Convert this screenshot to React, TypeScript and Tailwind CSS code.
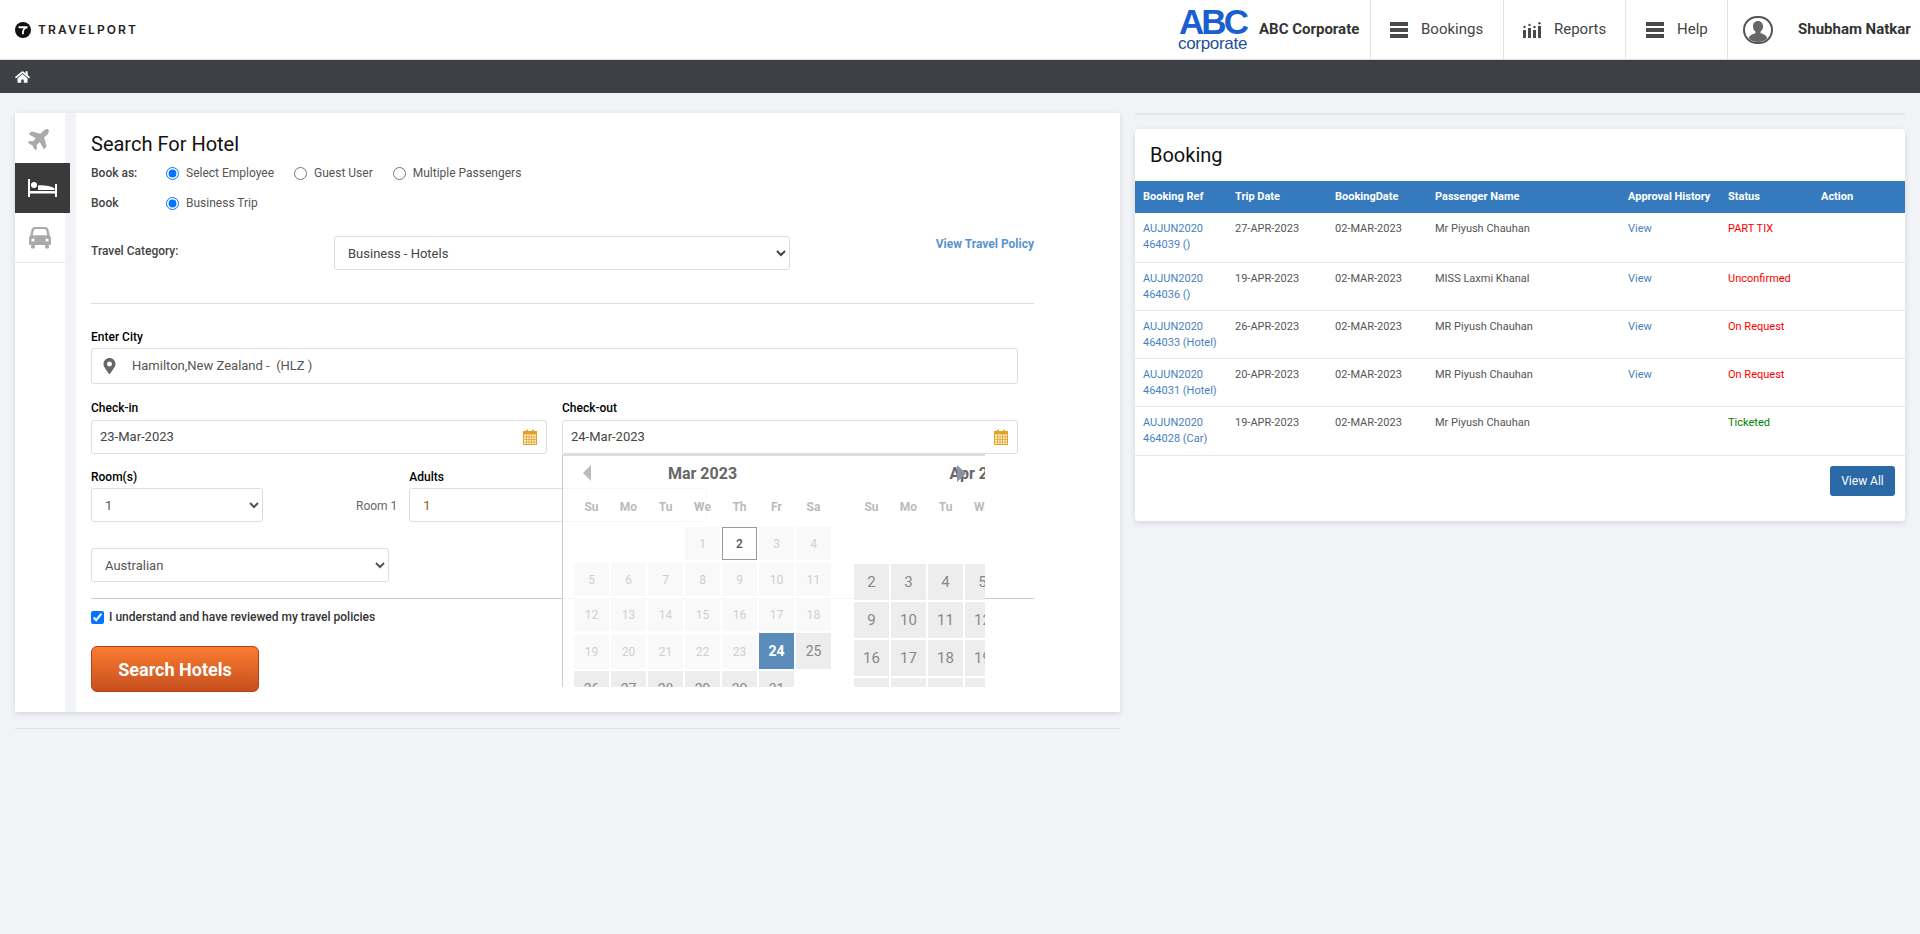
import { FaHome, FaMapMarkerAlt, FaPlane } from 'react-icons/fa';

const bookings = [
  { ref: 'AUJUN2020 464039 ()', trip: '27-APR-2023', name: 'Mr Piyush Chauhan', view: true, status: 'PART TIX', color: 'text-[#ff0000]', height: 'h-[49px]' },
  { ref: 'AUJUN2020 464036 ()', trip: '19-APR-2023', name: 'MISS Laxmi Khanal', view: true, status: 'Unconfirmed', color: 'text-[#ff0000]', height: 'h-[48px]' },
  { ref: 'AUJUN2020 464033 (Hotel)', trip: '26-APR-2023', name: 'MR Piyush Chauhan', view: true, status: 'On Request', color: 'text-[#ff0000]', height: 'h-[48px]' },
  { ref: 'AUJUN2020 464031 (Hotel)', trip: '20-APR-2023', name: 'MR Piyush Chauhan', view: true, status: 'On Request', color: 'text-[#ff0000]', height: 'h-[48px]' },
  { ref: 'AUJUN2020 464028 (Car)', trip: '19-APR-2023', name: 'Mr Piyush Chauhan', view: false, status: 'Ticketed', color: 'text-[#008000]', height: 'h-[49px]' },
];

const weekdays = ['Su', 'Mo', 'Tu', 'We', 'Th', 'Fr', 'Sa'];

function MenuIcon() {
  return (
    <svg width="18" height="16" viewBox="0 0 18 16" fill="#4a4a4a">
      <rect y="0" width="18" height="4" />
      <rect y="6" width="18" height="4" />
      <rect y="12" width="18" height="4" />
    </svg>
  );
}

function ReportsIcon() {
  return (
    <svg width="18" height="16" viewBox="0 0 18 16" fill="#4a4a4a">
      <rect x="0" y="8" width="3" height="8" />
      <rect x="5" y="6" width="3" height="10" />
      <rect x="10" y="8" width="3" height="8" />
      <rect x="15" y="4" width="3" height="12" />
      <circle cx="1.5" cy="5" r="1.2" />
      <circle cx="6.5" cy="3" r="1.2" />
      <circle cx="11.5" cy="5" r="1.2" />
      <circle cx="16.5" cy="1.2" r="1.2" />
    </svg>
  );
}

function AvatarIcon() {
  return (
    <svg width="30" height="28" viewBox="0 0 30 28">
      <rect x="1" y="1" width="28" height="26" rx="13" fill="#fff" stroke="#555" strokeWidth="2" />
      <path d="M15 5c-3.2 0-5 2.4-5 5.4 0 2.3 1 4.2 2.4 5.2v1.6c-3.2 1-6 2.2-6.6 4.8 1.8 2.6 5 4 9.2 4s7.4-1.4 9.2-4c-.6-2.6-3.400-3.800-6.600-4.800v-1.600c1.400-1 2.400-2.900 2.400-5.200C20 7.400 18.200 5 15 5z" fill="#666" />
    </svg>
  );
}

function LogoMark() {
  return (
    <svg width="16" height="16" viewBox="0 0 16 16">
      <circle cx="8" cy="8" r="8" fill="#111" />
      <path d="M3.500 4.300h9v1.900c-1.300.1-2.300.6-2.900 1.500-.6 1-.8 2.300-.8 4.600H7c0-2.300.2-3.700.8-4.900.3-.5.600-.9 1-1.200H3.500z" fill="#fff" />
    </svg>
  );
}

function CalendarIcon() {
  return (
    <svg width="14" height="16" viewBox="0 0 14 16" fill="none">
      <rect x="0.500" y="2.500" width="13" height="13" fill="#fdf3dc" stroke="#e3a126" />
      <rect x="0" y="2" width="14" height="3.500" fill="#e3a126" />
      <rect x="3" y="0.500" width="2" height="3" rx="1" fill="#e3a126" />
      <rect x="9" y="0.500" width="2" height="3" rx="1" fill="#e3a126" />
      <path d="M1 8h12M1 10.500h12M1 13h12M3.500 6v9M6 6v9M8.500 6v9M11 6v9" stroke="#e3a126" strokeWidth="0.800" />
    </svg>
  );
}

function BedIcon() {
  return (
    <svg width="29" height="18" viewBox="0 0 29 18" fill="#fff">
      <rect x="0" y="0" width="2" height="18" />
      <rect x="27" y="5" width="2" height="13" />
      <rect x="0" y="12" width="29" height="2.500" />
      <circle cx="6" cy="6" r="3" />
      <path d="M10 6.500c6-.5 12 .5 16 2.500 1 .6 1 2 0 2H10z" />
    </svg>
  );
}

function CarIcon() {
  return (
    <svg width="22" height="22" viewBox="0 0 22 22" fill="#aaa">
      <path d="M6 0h10c1.800 0 3 1 3.400 2.600L21 9c.7.500 1 1.300 1 2.200V17c0 .6-.4 1-1 1H1c-.6 0-1-.4-1-1v-5.800C0 10.300.3 9.500 1 9l1.600-6.400C3 1 4.200 0 6 0z" />
      <path d="M6.300 2h9.400c.7 0 1.200.4 1.400 1l1.200 5.200H3.700L4.900 3c.2-.6.700-1 1.400-1z" fill="#fff" />
      <circle cx="4" cy="13" r="1.600" fill="#fff" />
      <circle cx="18" cy="13" r="1.600" fill="#fff" />
      <rect x="2" y="18" width="4" height="3.500" rx="1" />
      <rect x="16" y="18" width="4" height="3.500" rx="1" />
    </svg>
  );
}

function MarchCell({ day }: { day: number }) {
  if (day === 2) {
    return <div className="flex h-[33px] items-center justify-center border border-[#999] bg-white text-[12px] font-medium text-[#555]">2</div>;
  }
  if (day === 24) {
    return <div className="flex h-[36px] items-center justify-center bg-[#5b8cba] text-[14px] font-bold text-white">24</div>;
  }
  if (day > 24) {
    return <div className="flex h-[36px] items-center justify-center bg-[#ededee] text-[14px] text-[#888]">{day}</div>;
  }
  return <div className={`flex items-center justify-center bg-[#f9f9f9] text-[12px] text-[#cfcfcf] ${day > 18 ? 'h-[34px] self-end' : 'h-[33px]'}`}>{day}</div>;
}

function CalendarPopup() {
  const march = Array.from({ length: 31 }, (_, i) => i + 1);
  const april = Array.from({ length: 30 }, (_, i) => i + 1);

  return (
    <div className="absolute left-0 top-full z-10 flex h-[233px] w-[423px] gap-[23px] overflow-hidden border-l border-t-2 border-l-[#ccc] border-t-[#ddd] bg-white/80 pl-[11px] pt-[4px]">
      <div className="w-[257px] shrink-0">
        <div className="flex h-[28px] items-center justify-center text-[16px] font-bold text-[#666]">Mar 2023</div>
        <div className="mt-[9px] grid h-[20px] grid-cols-7 gap-x-[2px] text-center text-[12px] font-bold leading-[20px] text-[#bbb]">
          {weekdays.map((d) => <div key={d}>{d}</div>)}
        </div>
        <div className="mt-[10px] grid grid-cols-7 grid-rows-[34px_33px_33px_36px_36px] gap-x-[2px] gap-y-[2px]">
          <div className="col-span-3" />
          {march.map((d) => <MarchCell key={d} day={d} />)}
        </div>
      </div>
      <div className="w-[257px] shrink-0">
        <div className="flex h-[28px] items-center justify-center text-[16px] font-bold text-[#666]">Apr 2023</div>
        <div className="mt-[9px] grid h-[20px] grid-cols-7 gap-x-[2px] text-center text-[12px] font-bold leading-[20px] text-[#bbb]">
          {weekdays.map((d) => <div key={d}>{d}</div>)}
        </div>
        <div className="mt-[9px] grid grid-cols-7 auto-rows-[36px] gap-x-[2px] gap-y-[2px]">
          <div className="col-span-6" />
          {april.map((d) => (
            <div key={d} className="flex items-center justify-center bg-[#ededee] text-[15px] text-[#888]">{d}</div>
          ))}
        </div>
      </div>
      <svg className="absolute left-[20px] top-[9px]" width="8" height="16" viewBox="0 0 8 16" fill="#bbb">
        <polygon points="8,0 8,16 0,8" />
      </svg>
      <svg className="absolute left-[394px] top-[9px]" width="9" height="17" viewBox="0 0 9 17" fill="#8794a8">
        <polygon points="0,0 0,17 9,8.500" />
      </svg>
    </div>
  );
}

function DateField({ value, label }: { value: string; label: string }) {
  return (
    <div>
      <div className="h-[16px] text-[12px] font-medium leading-[16px] text-black">{label}</div>
      <div className="mt-[4px] flex h-[34px] w-[456px] items-center justify-between rounded-[3px] border border-[#ddd] bg-white pl-[8px] pr-[9px] text-[13px] text-[#444]">
        <span>{value}</span>
        <CalendarIcon />
      </div>
    </div>
  );
}

function Radio({ name, label, checked, className }: { name: string; label: string; checked?: boolean; className?: string }) {
  return (
    <label className={`flex items-center text-[12px] text-[#555] ${className ?? ''}`}>
      <input type="radio" name={name} defaultChecked={checked} className="m-0 h-[13px] w-[13px]" />
      <span className="ml-[7px]">{label}</span>
    </label>
  );
}

function SearchForm() {
  return (
    <div className="flex-1 pl-[15px] pt-[16px]">
      <div className="w-[943px]">
        <h2 className="h-[30px] text-[20px] leading-[30px] text-[#111]">Search For Hotel</h2>
        <div className="mt-[3px] flex h-[22px] items-center">
          <div className="w-[75px] text-[12px] font-medium text-[#444]">Book as:</div>
          <Radio name="bookas" label="Select Employee" checked />
          <Radio name="bookas" label="Guest User" className="ml-[20px]" />
          <Radio name="bookas" label="Multiple Passengers" className="ml-[20px]" />
        </div>
        <div className="mt-[8px] flex h-[22px] items-center">
          <div className="w-[75px] text-[12px] font-medium text-[#444]">Book</div>
          <Radio name="book" label="Business Trip" checked />
        </div>
        <div className="mt-[22px] flex items-start">
          <div className="mt-[7px] w-[243px] text-[12px] font-medium leading-[16px] text-[#444]">Travel Category:</div>
          <select className="h-[34px] w-[456px] rounded-[3px] border border-[#ddd] bg-white pl-[9px] text-[13px] text-[#444]">
            <option>Business - Hotels</option>
          </select>
          <a className="ml-auto text-[12px] font-bold leading-[16px] text-[#5b92d0]">View Travel Policy</a>
        </div>
        <div className="mt-[33px] h-px bg-[#ddd]" />
        <div className="mt-[25px] h-[16px] text-[12px] font-medium leading-[16px] text-black">Enter City</div>
        <div className="mt-[3px] flex h-[36px] w-[927px] items-center rounded-[3px] border border-[#ddd] bg-white pl-[11px] text-[13px] text-[#555]">
          <FaMapMarkerAlt className="h-[16px] w-[13px] text-[#666]" />
          <span className="ml-[16px] whitespace-pre">Hamilton,New Zealand -  (HLZ )</span>
        </div>
        <div className="mt-[16px] flex gap-[15px]">
          <DateField label="Check-in" value="23-Mar-2023" />
          <div className="relative">
            <DateField label="Check-out" value="24-Mar-2023" />
            <CalendarPopup />
          </div>
        </div>
        <div className="mt-[15px] flex">
          <div className="w-[172px]">
            <div className="h-[16px] text-[12px] font-medium leading-[16px] text-black">Room(s)</div>
            <select className="mt-[3px] h-[34px] w-full rounded-[3px] border border-[#ddd] bg-white pl-[9px] text-[13px] text-[#555]">
              <option>1</option>
            </select>
          </div>
          <div className="ml-[93px] mt-[19px] flex h-[34px] items-center pt-[2px] text-[12px] text-[#666]">Room 1</div>
          <div className="ml-[12px] w-[298px]">
            <div className="h-[16px] text-[12px] font-medium leading-[16px] text-black">Adults</div>
            <select className="mt-[3px] h-[34px] w-full rounded-[3px] border border-[#ddd] bg-white pl-[9px] text-[13px] text-[#8a5a2b]">
              <option>1</option>
            </select>
          </div>
        </div>
        <select className="mt-[26px] block h-[34px] w-[298px] rounded-[3px] border border-[#ddd] bg-white pl-[9px] text-[13px] text-[#555]">
          <option>Australian</option>
        </select>
        <div className="mt-[16px] h-px bg-[#ccc]" />
        <label className="mt-[10px] flex h-[16px] items-center text-[12px] font-medium text-[#333]">
          <input type="checkbox" defaultChecked className="m-0 h-[13px] w-[13px]" />
          <span className="ml-[5px]">I understand and have reviewed my travel policies</span>
        </label>
        <button className="mt-[21px] block h-[46px] w-[168px] rounded-[6px] border border-[#b5421a] bg-gradient-to-b from-[#fb7c31] to-[#c64f1e] text-[18px] font-bold text-white">
          Search Hotels
        </button>
      </div>
    </div>
  );
}

function BookingCard() {
  return (
    <div className="mt-[14px] h-[392px] rounded-[4px] bg-white shadow-[0_2px_6px_rgba(0,0,0,0.12)]">
      <div className="flex h-[52px] items-center pl-[15px] text-[20px] text-[#111]">Booking</div>
      <table className="w-full table-fixed border-collapse text-left text-[11px]">
        <colgroup>
          <col className="w-[92px]" />
          <col className="w-[100px]" />
          <col className="w-[100px]" />
          <col className="w-[193px]" />
          <col className="w-[100px]" />
          <col className="w-[93px]" />
          <col />
        </colgroup>
        <thead>
          <tr className="h-[32px] bg-[#357abd] text-white">
            <th className="px-[8px] font-bold">Booking Ref</th>
            <th className="px-[8px] font-bold">Trip Date</th>
            <th className="px-[8px] font-bold">BookingDate</th>
            <th className="px-[8px] font-bold">Passenger Name</th>
            <th className="whitespace-nowrap px-[8px] font-bold">Approval History</th>
            <th className="px-[8px] font-bold">Status</th>
            <th className="px-[8px] font-bold">Action</th>
          </tr>
        </thead>
        <tbody className="align-top leading-[16px] text-[#555]">
          {bookings.map((b) => (
            <tr key={b.ref} className={`${b.height} border-b border-[#e8e8e8]`}>
              <td className="px-[8px] pt-[8px] text-[#4a7fc1]">{b.ref}</td>
              <td className="px-[8px] pt-[8px]">{b.trip}</td>
              <td className="px-[8px] pt-[8px]">02-MAR-2023</td>
              <td className="px-[8px] pt-[8px]">{b.name}</td>
              <td className="px-[8px] pt-[8px] text-[#4a7fc1]">{b.view ? 'View' : ''}</td>
              <td className={`px-[8px] pt-[8px] ${b.color}`}>{b.status}</td>
              <td className="px-[8px] pt-[8px]" />
            </tr>
          ))}
        </tbody>
      </table>
      <div className="flex justify-end pr-[10px] pt-[10px]">
        <button className="h-[30px] w-[65px] rounded-[3px] bg-[#2a69a6] text-[12px] text-white">View All</button>
      </div>
    </div>
  );
}

export default function App() {
  return (
    <div className="min-h-screen bg-[#f1f3f7] font-[Roboto,sans-serif]">
      <header className="flex h-[60px] items-stretch border-b border-[#ddd] bg-white">
        <div className="flex items-center pl-[15px]">
          <LogoMark />
          <span className="ml-[7px] font-[Inter,sans-serif] text-[12px] font-semibold tracking-[2.100px] text-[#222]">TRAVELPORT</span>
        </div>
        <div className="ml-auto flex items-stretch">
          <div className="flex w-[71px] flex-col items-center pt-[7px] font-['Liberation_Sans',sans-serif] leading-none">
            <span className="text-[35px] font-bold leading-[30px] tracking-[-3px] text-[#1a5fd0]">ABC</span>
            <span className="text-[17px] leading-[14px] tracking-[-0.300px] text-[#1f4f96]">corporate</span>
          </div>
          <div className="ml-[11px] flex w-[111px] items-center text-[15px] font-bold text-[#333]">ABC Corporate</div>
          <nav className="flex items-stretch text-[15px] text-[#444]">
            <div className="flex w-[133px] items-center border-l border-[#e4e4e4] pl-[19px]">
              <MenuIcon />
              <span className="ml-[13px]">Bookings</span>
            </div>
            <div className="flex w-[122px] items-center border-l border-[#e4e4e4] pl-[19px]">
              <ReportsIcon />
              <span className="ml-[13px]">Reports</span>
            </div>
            <div className="flex w-[102px] items-center border-l border-[#e4e4e4] pl-[20px]">
              <MenuIcon />
              <span className="ml-[13px]">Help</span>
            </div>
            <div className="flex w-[193px] items-center border-l border-[#e4e4e4] pl-[15px]">
              <AvatarIcon />
              <span className="ml-[25px] whitespace-nowrap font-bold text-[#333]">Shubham Natkar</span>
            </div>
          </nav>
        </div>
      </header>
      <div className="flex h-[33px] items-center bg-[#3d4145] pl-[15px]">
        <FaHome className="h-[14px] w-[15px] text-white" />
      </div>
      <main className="flex gap-[15px] pl-[15px] pt-[20px]">
        <div className="w-[1105px]">
          <div className="flex h-[599px] bg-white shadow-[0_2px_6px_rgba(0,0,0,0.12)]">
            <div className="relative w-[50px] bg-white">
              <div className="flex h-[50px] items-center justify-center">
                <FaPlane className="h-[24px] w-[24px] -rotate-45 text-[#aaa]" />
              </div>
              <div className="flex h-[50px] w-[55px] items-center justify-center bg-[#3a3a3a]">
                <BedIcon />
              </div>
              <div className="flex h-[50px] items-center justify-center border-b border-[#e8e8e8]">
                <CarIcon />
              </div>
            </div>
            <div className="w-[11px] bg-[#f1f3f7]" />
            <SearchForm />
          </div>
          <div className="mt-[16px] h-[1px] bg-[#dcdee2]" />
        </div>
        <div className="w-[770px]">
          <div className="h-[2px] bg-[#e4e6ea]" />
          <BookingCard />
        </div>
      </main>
    </div>
  );
}
